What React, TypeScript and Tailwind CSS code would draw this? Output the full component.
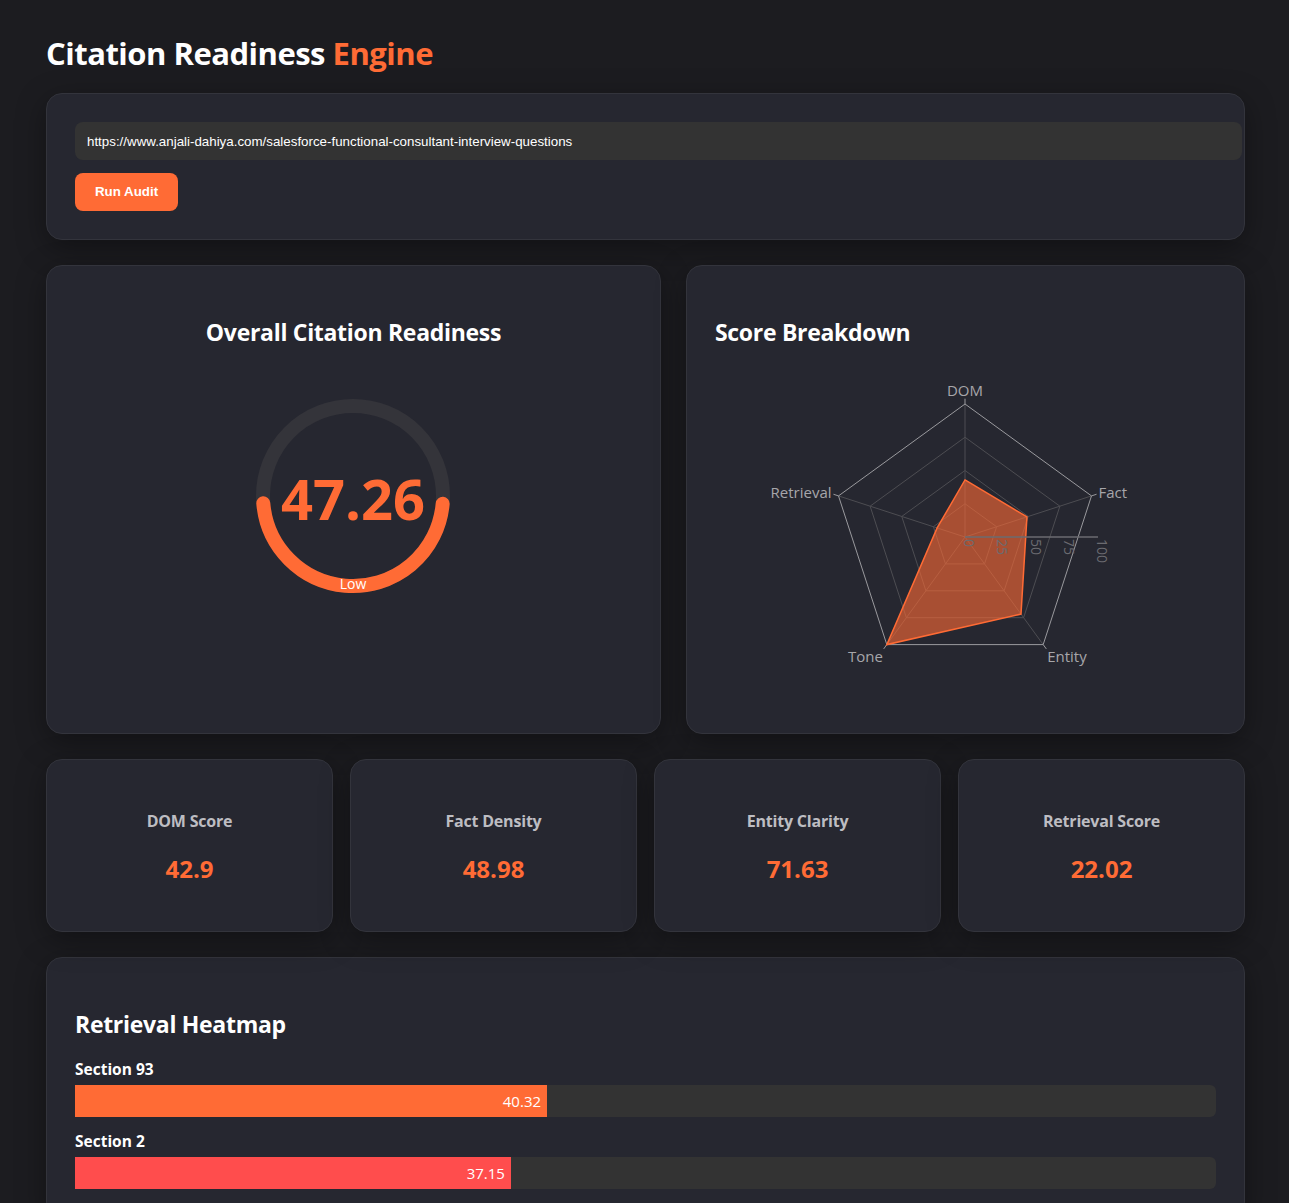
import React from 'react'

const ORANGE = '#ff6b35'
const FONT = "'Open Sans', sans-serif"

const stats = [
  { label: 'DOM Score', value: '42.9' },
  { label: 'Fact Density', value: '48.98' },
  { label: 'Entity Clarity', value: '71.63' },
  { label: 'Retrieval Score', value: '22.02' },
]

const radar = [
  { axis: 'DOM', value: 42.9 },
  { axis: 'Fact', value: 48.98 },
  { axis: 'Entity', value: 71.63 },
  { axis: 'Tone', value: 100 },
  { axis: 'Retrieval', value: 22.02 },
]

const heatmap = [
  { name: 'Section 93', score: 40.32, color: 'bg-[#ff6b35]' },
  { name: 'Section 2', score: 37.15, color: 'bg-[#ff4d4d]' },
]

const card = 'bg-[#262730] border border-[#33343c] rounded-2xl shadow-[0_8px_30px_rgba(0,0,0,0.35)]'

export default function App() {
  return (
    <div className="min-h-screen bg-[#1c1c20] pl-[46px] pr-[44px] pt-[33px] pb-10 font-['Open_Sans',sans-serif] text-white">
      <h1 className="text-[31px] leading-[40px] tracking-[-0.5px] font-bold mb-[20px]">
        Citation Readiness <span className="text-[#ff6b35]">Engine</span>
      </h1>

      <div className={`${card} p-[28px]`}>
        <input
          readOnly
          value="https://www.anjali-dahiya.com/salesforce-functional-consultant-interview-questions"
          className="block w-[calc(100%+26px)] h-[38px] px-3 rounded-lg bg-[#333333] text-[13.33px] text-white font-['Liberation_Sans',Arial,sans-serif] outline-none"
        />
        <button className="mt-[13px] h-[38px] w-[103px] rounded-lg bg-[#ff6b35] text-[13.33px] font-bold text-white font-['Liberation_Sans',Arial,sans-serif]">
          Run Audit
        </button>
      </div>

      <div className="grid grid-cols-[1.1fr_1fr] gap-[25px] mt-[25px]">
        <div className={`${card} h-[469px] p-[28px] flex flex-col items-center`}>
          <h2 className="mt-[22px] text-[23px] leading-[32px] tracking-[-0.3px] font-bold">Overall Citation Readiness</h2>
          <div className="mt-[43px]">
            <Gauge value={47.26} />
          </div>
        </div>
        <div className={`${card} h-[469px] p-[28px] flex flex-col`}>
          <h2 className="mt-[22px] text-[23px] leading-[32px] tracking-[-0.3px] font-bold">Score Breakdown</h2>
          <div className="mt-[24px] flex justify-center">
            <Radar />
          </div>
        </div>
      </div>

      <div className="grid grid-cols-4 gap-[17px] mt-[25px]">
        {stats.map(s => (
          <Stat key={s.label} label={s.label} value={s.value} />
        ))}
      </div>

      <div className={`${card} mt-[25px] px-[28px] pt-[50px] pb-[28px]`}>
        <h2 className="text-[23px] leading-[32px] tracking-[-0.3px] font-bold">Retrieval Heatmap</h2>
        <div className="mt-[19px] flex flex-col gap-[14px]">
          {heatmap.map(h => (
            <div key={h.name}>
              <div className="text-[15.5px] leading-[20px] font-bold mb-[6px]">{h.name}</div>
              <div className="h-[32px] rounded-md bg-[#333333]">
                <div
                  className={`h-full ${h.color} px-[6px] box-content flex items-center justify-end text-[15px] text-white`}
                  style={{ width: `${h.score}%` }}
                >
                  {h.score}
                </div>
              </div>
            </div>
          ))}
        </div>
      </div>
    </div>
  )
}

function Stat({ label, value }: { label: string; value: string }) {
  return (
    <div className={`${card} h-[173px] pt-[50px] flex flex-col items-center`}>
      <div className="text-[16px] leading-[22px] tracking-[-0.2px] font-bold text-[#bdbdc2]">{label}</div>
      <div className="mt-[21px] text-[24px] leading-[32px] font-bold text-[#ff6b35]">{value}</div>
    </div>
  )
}

function Gauge({ value }: { value: number }) {
  const r = 90
  const c = 2 * Math.PI * r
  const len = (value / 100) * c
  const start = 90 - (value / 100) * 180
  return (
    <svg width="210" height="210" viewBox="0 0 210 210">
      <circle cx="105" cy="105" r={r} fill="none" stroke="#34343a" strokeWidth="14" />
      <circle
        cx="105"
        cy="105"
        r={r}
        fill="none"
        stroke={ORANGE}
        strokeWidth="14"
        strokeLinecap="round"
        strokeDasharray={`${len} ${c}`}
        transform={`rotate(${start} 105 105)`}
      />
      <text x="105" y="129" textAnchor="middle" fill={ORANGE} fontSize="56" fontWeight="700" fontFamily={FONT}>
        {value}
      </text>
      <text x="105" y="198" textAnchor="middle" fill="#ffffff" fontSize="14" fontFamily={FONT}>
        Low
      </text>
    </svg>
  )
}

function Radar() {
  const W = 460
  const H = 330
  const cx = W / 2
  const cy = H / 2
  const R = 133
  const pt = (i: number, v: number) => {
    const a = ((-90 + 72 * i) * Math.PI) / 180
    return [cx + R * (v / 100) * Math.cos(a), cy + R * (v / 100) * Math.sin(a)]
  }
  const ring = (v: number) => radar.map((_, i) => pt(i, v).join(',')).join(' ')
  const labelPos = [
    { dx: 0, dy: -8, anchor: 'middle' },
    { dx: 7, dy: 2, anchor: 'start' },
    { dx: 4, dy: 17, anchor: 'start' },
    { dx: -4, dy: 17, anchor: 'end' },
    { dx: -7, dy: 2, anchor: 'end' },
  ]
  return (
    <svg width={W} height={H} viewBox={`0 0 ${W} ${H}`} fontFamily={FONT}>
      {[25, 50, 75].map(v => (
        <polygon key={v} points={ring(v)} fill="none" stroke="#4d4d52" strokeWidth="1" />
      ))}
      {radar.map((_, i) => {
        const [x, y] = pt(i, 100)
        return <line key={i} x1={cx} y1={cy} x2={x} y2={y} stroke="#4d4d52" strokeWidth="1" />
      })}
      <polygon points={ring(100)} fill="none" stroke="#9a9a9e" strokeWidth="1" />
      {radar.map((_, i) => {
        const [x1, y1] = pt(i, 100)
        const [x2, y2] = pt(i, 104)
        return <line key={i} x1={x1} y1={y1} x2={x2} y2={y2} stroke="#9a9a9e" strokeWidth="1" />
      })}
      <polygon
        points={radar.map((d, i) => pt(i, d.value).join(',')).join(' ')}
        fill={ORANGE}
        fillOpacity="0.6"
        stroke={ORANGE}
        strokeWidth="1.5"
      />
      <line x1={cx} y1={cy} x2={cx + R} y2={cy} stroke="#6b6b70" strokeWidth="1.5" />
      {[0, 25, 50, 75, 100].map(v => {
        const x = cx + (R * v) / 100 - 1
        const y = cy + 2
        return (
          <text key={v} x={x} y={y} transform={`rotate(90 ${x} ${y})`} fill="#6b6b70" fontSize="14">
            {v}
          </text>
        )
      })}
      {radar.map((d, i) => {
        const [x, y] = pt(i, 100)
        const p = labelPos[i]
        return (
          <text key={d.axis} x={x + p.dx} y={y + p.dy} textAnchor={p.anchor as 'start'} fill="#a6a6aa" fontSize="15">
            {d.axis}
          </text>
        )
      })}
    </svg>
  )
}
